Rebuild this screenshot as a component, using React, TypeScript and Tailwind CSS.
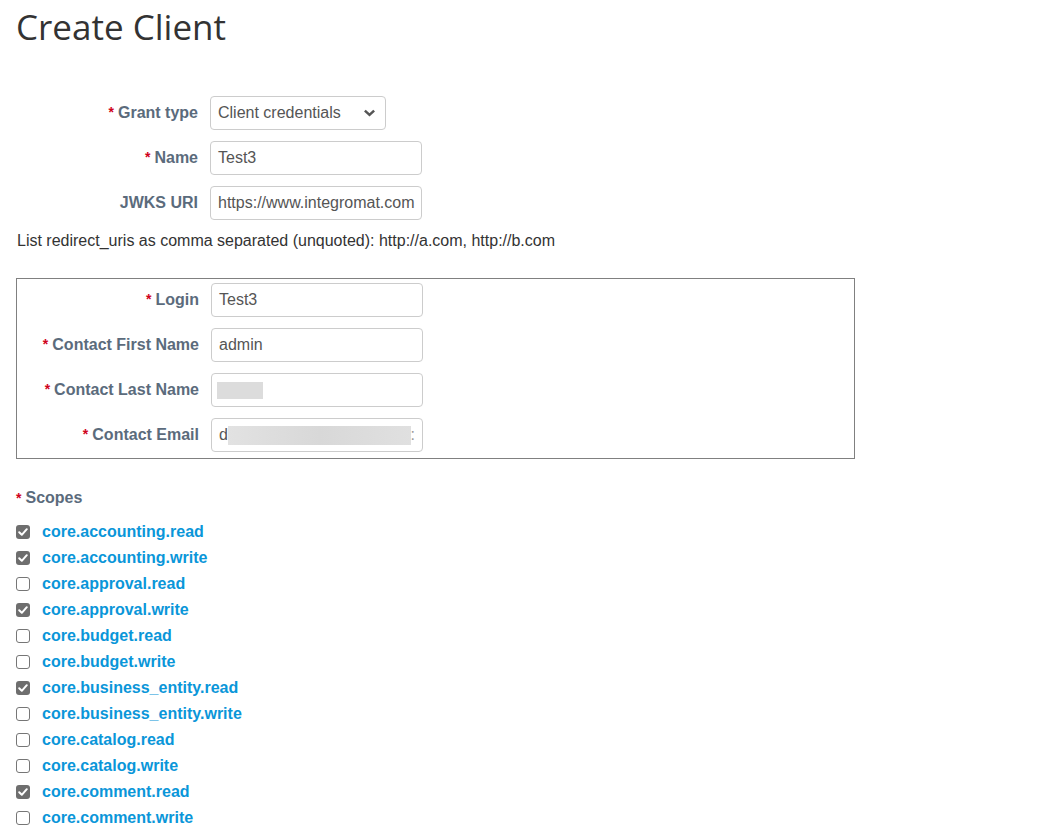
import React from "react";

type RowProps = {
  label: string;
  required?: boolean;
  labelWidth: string;
  children: React.ReactNode;
};

const Row: React.FC<RowProps> = ({ label, required, labelWidth, children }) => (
  <div className="flex items-center h-[34px]">
    <label
      className={`${labelWidth} shrink-0 text-right font-bold text-[16px] text-[#5b6b7c] pr-[12px]`}
    >
      {required && <span className="text-[#d0021b] text-[14px] align-top mr-[4px] relative top-[1px]">*</span>}
      {label}
    </label>
    {children}
  </div>
);

const inputClasses =
  "h-[34px] w-[212px] border border-[#ccc] rounded-[4px] px-[7px] text-[16px] text-[#555] flex items-center overflow-hidden whitespace-nowrap bg-white";

const CheckIcon = () => (
  <svg viewBox="0 0 14 14" className="w-[14px] h-[14px]">
    <path d="M3.2 7.2 L5.8 9.8 L10.8 4.2" fill="none" stroke="white" strokeWidth="2" strokeLinecap="round" strokeLinejoin="round" />
  </svg>
);

const scopes: [string, boolean][] = [
  ["core.accounting.read", true],
  ["core.accounting.write", true],
  ["core.approval.read", false],
  ["core.approval.write", true],
  ["core.budget.read", false],
  ["core.budget.write", false],
  ["core.business_entity.read", true],
  ["core.business_entity.write", false],
  ["core.catalog.read", false],
  ["core.catalog.write", false],
  ["core.comment.read", true],
  ["core.comment.write", false],
  ["core.contact.read", false],
];

export default function App() {
  return (
    <div className="h-[837px] overflow-hidden bg-white font-['Liberation_Sans',Arial,sans-serif]">
      <h1 className="font-['Open_Sans',sans-serif] text-[35px] text-[#333] leading-none pt-[9px] pl-[16px] font-normal">
        Create Client
      </h1>

      <div className="mt-[52px] flex flex-col gap-[11px]">
        <Row label="Grant type" required labelWidth="w-[210px]">
          <div className="h-[34px] w-[176px] border border-[#ccc] rounded-[4px] pl-[7px] pr-[9px] text-[16px] text-[#555] flex items-center justify-between">
            <span>Client credentials</span>
            <svg viewBox="0 0 14 9" className="w-[13px] h-[8px]">
              <path d="M1.8 1.8 L7 6.6 L12.2 1.8" fill="none" stroke="#555" strokeWidth="2.8" />
            </svg>
          </div>
        </Row>
        <Row label="Name" required labelWidth="w-[210px]">
          <div className={inputClasses}>Test3</div>
        </Row>
        <Row label="JWKS URI" labelWidth="w-[210px]">
          <div className={inputClasses}>https://www.integromat.com</div>
        </Row>
      </div>

      <p className="text-[16px] text-[#333] pl-[17px] mt-[11px] leading-[20px]">
        List redirect_uris as comma separated (unquoted): http://a.com, http://b.com
      </p>

      <div className="ml-[16px] mt-[27px] w-[839px] border border-[#808080] pt-[4px] pb-[6px] flex flex-col gap-[11px]">
        <Row label="Login" required labelWidth="w-[194px]">
          <div className={inputClasses}>Test3</div>
        </Row>
        <Row label="Contact First Name" required labelWidth="w-[194px]">
          <div className={inputClasses}>admin</div>
        </Row>
        <Row label="Contact Last Name" required labelWidth="w-[194px]">
          <div className={inputClasses}>
            <div className="h-[17px] w-[46px] bg-[#dcdcdc] -ml-[2px]" />
          </div>
        </Row>
        <Row label="Contact Email" required labelWidth="w-[194px]">
          <div className={`${inputClasses} relative`}>
            <span>d</span>
            <div className="h-[19px] w-[189px] bg-gradient-to-r from-[#e2e2e2] via-[#d8d8d8] to-[#e0e0e0]" />
            <span className="text-[#999]">:</span>
          </div>
        </Row>
      </div>

      <div className="pl-[16px] mt-[29px] font-bold text-[16px] text-[#5b6b7c] leading-[20px]">
        <span className="text-[#d0021b] text-[14px] align-top mr-[4px]">*</span>
        Scopes
      </div>

      <ul className="mt-[11px] pl-[16px] flex flex-col">
        {scopes.map(([name, checked]) => (
          <li key={name} className="flex items-center h-[26px]">
            {checked ? (
              <span className="w-[14px] h-[14px] rounded-[3px] bg-[#6e6e6e] flex items-center justify-center">
                <CheckIcon />
              </span>
            ) : (
              <span className="w-[14px] h-[14px] rounded-[3px] border border-[#767676] bg-white" />
            )}
            <span className="ml-[12px] font-bold text-[16px] text-[#0a96d9]">{name}</span>
          </li>
        ))}
      </ul>
    </div>
  );
}
